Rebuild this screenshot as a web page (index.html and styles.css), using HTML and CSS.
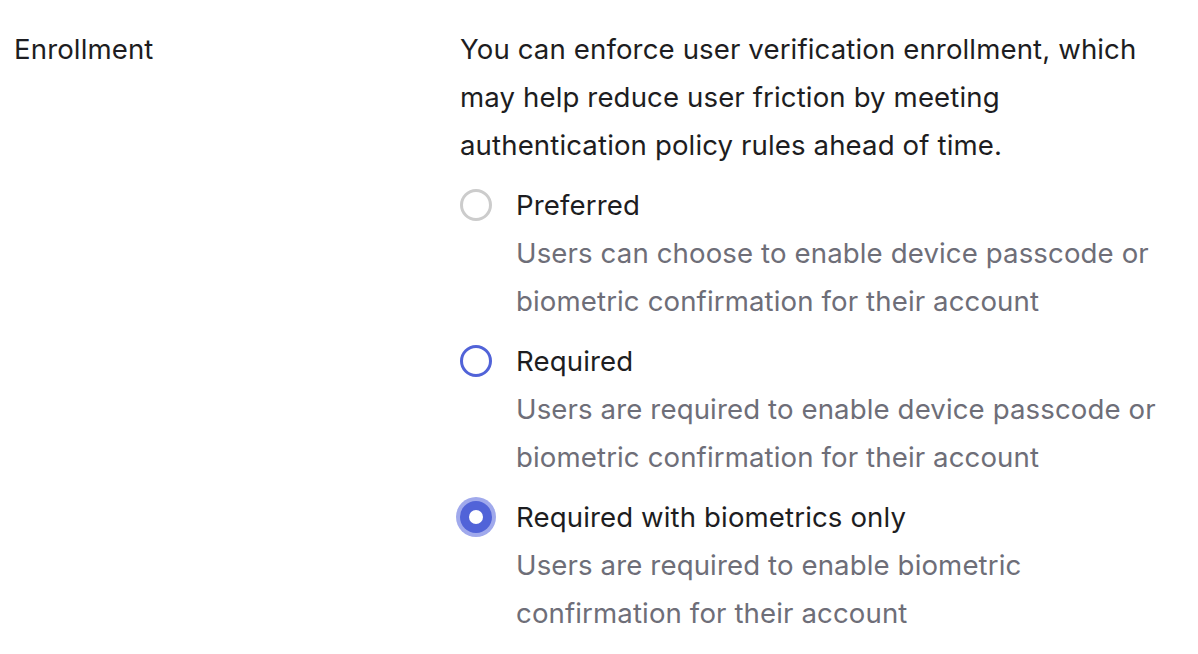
FILE: index.html
```html
<!DOCTYPE html>
<html>
<head>
<meta charset="utf-8">
<link rel="stylesheet" href="styles.css">
</head>
<body>
<div class="row">
  <div class="label">Enrollment</div>
  <div class="content">
    <p class="intro">You can enforce user verification enrollment, which may help reduce user friction by meeting authentication policy rules ahead of time.</p>
    <div class="options">
      <div class="option">
        <span class="radio"></span>
        <div class="opt-text">
          <div class="opt-label">Preferred</div>
          <div class="opt-desc">Users can choose to enable device passcode or biometric confirmation for their account</div>
        </div>
      </div>
      <div class="option">
        <span class="radio hover"></span>
        <div class="opt-text">
          <div class="opt-label">Required</div>
          <div class="opt-desc">Users are required to enable device passcode or biometric confirmation for their account</div>
        </div>
      </div>
      <div class="option">
        <span class="radio checked"></span>
        <div class="opt-text">
          <div class="opt-label">Required with biometrics only</div>
          <div class="opt-desc">Users are required to enable biometric confirmation for their account</div>
        </div>
      </div>
    </div>
  </div>
</div>
</body>
</html>
```
FILE: styles.css
```css
html, body {
  margin: 0;
  padding: 0;
  background: #ffffff;
}
body {
  font-family: Inter, "Noto Sans", sans-serif;
  font-size: 27.6px;
  letter-spacing: 0.12px;
  line-height: 48px;
  color: #1d1d21;
}
.row {
  display: flex;
  padding: 25px 0 0 14px;
}
.label {
  width: 446px;
  flex: none;
}
.content {
  width: 712px;
  flex: none;
}
.intro {
  margin: 0;
}
.options {
  display: flex;
  flex-direction: column;
  gap: 12px;
  margin-top: 12px;
}
.option {
  display: flex;
  align-items: flex-start;
}
.radio {
  flex: none;
  box-sizing: border-box;
  width: 32px;
  height: 32px;
  margin: 8px 24px 0 0;
  border-radius: 50%;
  border: 3px solid #cccccc;
  background: #fff;
  position: relative;
}
.radio.hover {
  border-color: #5163d8;
}
.radio.checked {
  border: none;
  background: #5163d8;
  box-shadow: 0 0 0 4px #a0a9ec;
}
.radio.checked::after {
  content: "";
  position: absolute;
  left: 50%;
  top: 50%;
  width: 14px;
  height: 14px;
  margin: -7px 0 0 -7px;
  border-radius: 50%;
  background: #fff;
}
.opt-text {
  flex: 1;
}
.opt-label {
  color: #1d1d21;
}
.opt-desc {
  color: #6e6e78;
}
```
